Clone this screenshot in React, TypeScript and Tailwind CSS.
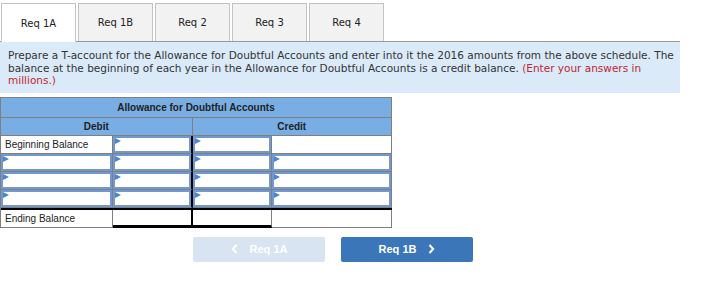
import React from 'react';

const tabs = ['Req 1A', 'Req 1B', 'Req 2', 'Req 3', 'Req 4'];

function Marker() {
  return (
    <span className="absolute left-0 top-0 w-0 h-0 border-t-[3px] border-b-[3px] border-l-[6px] border-t-transparent border-b-transparent border-l-[#4a86cf]" />
  );
}

function InputCell({ w, marker = true, extra = '' }: { w: string; marker?: boolean; extra?: string }) {
  return (
    <div className={`${w} h-full border-r border-b border-[#7f7f7f] p-0 ${extra}`}>
      <div className="relative h-full w-full border-2 border-[#7199cf]">{marker && <Marker />}</div>
    </div>
  );
}

function PlainCell({ w, children, extra = '' }: { w: string; children?: React.ReactNode; extra?: string }) {
  return (
    <div className={`${w} h-full border-r border-b border-[#7f7f7f] flex items-center pl-[4px] ${extra}`}>
      {children}
    </div>
  );
}

function Chevron({ dir }: { dir: 'left' | 'right' }) {
  return (
    <svg width="7" height="10" viewBox="0 0 7 10" fill="none">
      <path
        d={dir === 'left' ? 'M5.5 1 L1.8 5 L5.5 9' : 'M1.5 1 L5.2 5 L1.5 9'}
        stroke="white"
        strokeWidth="2"
      />
    </svg>
  );
}

export default function App() {
  return (
    <div className="w-[701px] h-[287px] bg-white text-[#222] font-['DejaVu_Sans',sans-serif]">
      <div className="flex gap-[2px] pl-[1px] pt-[3px]">
        {tabs.map((t, i) => (
          <div
            key={t}
            className={`w-[75px] h-[38px] flex items-center justify-center text-[10px] border border-[#c3c3c3] border-b-0 ${
              i === 0 ? 'bg-white relative z-10 h-[39px] -mb-px border-[#b8b8b8]' : 'bg-[#f2f2f2]'
            }`}
          >
            {t}
          </div>
        ))}
      </div>

      <div className="w-[680px] border-t border-[#9a9a9a] bg-[#dbeaf9] pl-[8px] pr-[2px] pt-[7px] pb-[6px] text-[10.5px] leading-[12.5px] text-[#333]">
        Prepare a T-account for the Allowance for Doubtful Accounts and enter into it the 2016 amounts from the above schedule. The
        balance at the beginning of each year in the Allowance for Doubtful Accounts is a credit balance.{' '}
        <span className="text-[#c1272d]">(Enter your answers in millions.)</span>
      </div>

      <div className="mt-[4px] w-[392px] border-l border-t border-[#7f7f7f] font-['Liberation_Sans',Arial,sans-serif] text-[10px]">
        <div className="h-[20px] flex items-center justify-center bg-[#78aee4] border-r border-b border-[#7f7f7f] font-bold text-[#222]">
          Allowance for Doubtful Accounts
        </div>
        <div className="h-[18px] flex bg-[#78aee4] font-bold text-[#222]">
          <div className="w-[192px] flex items-center justify-center border-r border-b border-[#7f7f7f]">Debit</div>
          <div className="w-[200px] flex items-center justify-center border-r border-b border-[#7f7f7f]">Credit</div>
        </div>
        <div className="h-[18px] flex">
          <PlainCell w="w-[112px]">Beginning Balance</PlainCell>
          <InputCell w="w-[80px]" extra="border-r-2 border-r-black" />
          <InputCell w="w-[80px]" />
          <PlainCell w="w-[120px]" />
        </div>
        {[0, 1, 2].map((r) => (
          <div key={r} className="h-[18px] flex">
            <InputCell w="w-[112px]" />
            <InputCell w="w-[80px]" extra="border-r-2 border-r-black" />
            <InputCell w="w-[80px]" />
            <InputCell w="w-[120px]" />
          </div>
        ))}
        <div className="h-[20px] flex border-t-2 border-black">
          <PlainCell w="w-[112px]">Ending Balance</PlainCell>
          <PlainCell w="w-[80px]" extra="border-r-2 border-r-black border-b-[3px] border-b-black" />
          <PlainCell w="w-[80px]" extra="border-b-[3px] border-b-black" />
          <PlainCell w="w-[120px]" />
        </div>
      </div>

      <div className="mt-[9px] ml-[193px] flex gap-[16px] font-['Liberation_Sans',Arial,sans-serif] text-[11px] font-bold text-white">
        <button className="w-[132px] h-[25px] rounded-[2px] bg-[#d8e4f2] flex items-center justify-center gap-[12px]">
          <Chevron dir="left" />
          <span>Req 1A</span>
        </button>
        <button className="w-[132px] h-[25px] rounded-[2px] bg-[#3a76b8] flex items-center justify-center gap-[12px]">
          <span>Req 1B</span>
          <Chevron dir="right" />
        </button>
      </div>
    </div>
  );
}
